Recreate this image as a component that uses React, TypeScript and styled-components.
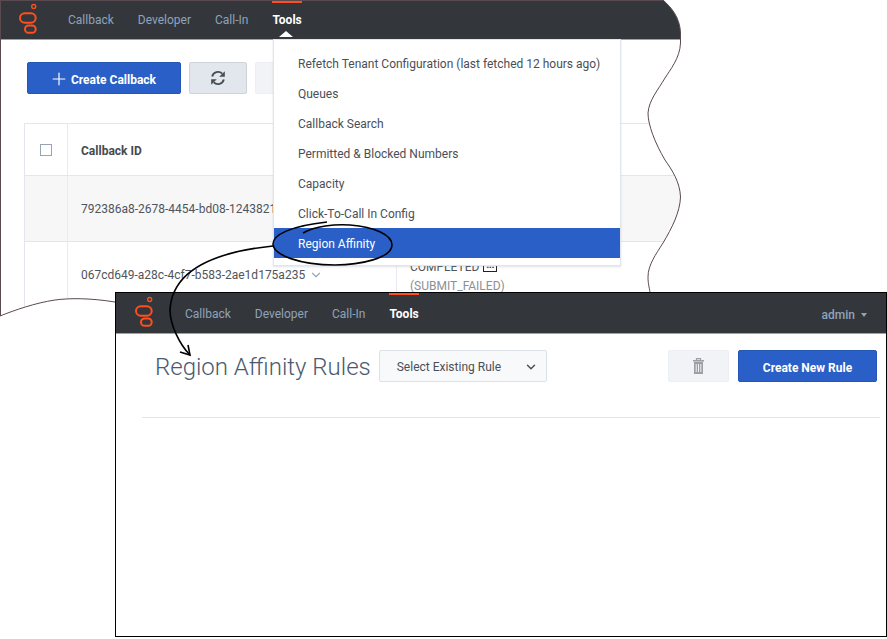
import React from "react";
import styled, { createGlobalStyle } from "styled-components";
import { ChevronDown, Plus } from "lucide-react";

const Global = createGlobalStyle`
  html, body { margin: 0; padding: 0; background: #fff; }
  body { font-family: Roboto, "Liberation Sans", sans-serif; }
  * { box-sizing: border-box; }
`;

const WAVE =
  "M663 0 C672 8 680 18 680.5 33 L680.5 43 C680 58 670 70 665 78 C658 90 649 100 648 113 C648 125 655 143 665 160 C672 170 680 182 680.5 197 C680 212 672 228 663 243 C656 254 648 265 648 277 C648 285 650 290 650 293";
const BOTTOM = "L115 302 C90 298 70 298 55 300 C35 303 15 310 0 316 Z";
const OUTER = `M0 0 L663 0 ${WAVE.slice(WAVE.indexOf("C"))} ${BOTTOM}`;

const Canvas = styled.div`
  position: relative;
  width: 887px;
  height: 639px;
  overflow: hidden;
  background: #fff;
`;

const BackWindow = styled.div`
  position: absolute;
  left: 0;
  top: 0;
  width: 690px;
  height: 320px;
  background: #fff;
  clip-path: path("${OUTER}");
`;

const Overlay = styled.svg`
  position: absolute;
  left: 0;
  top: 0;
  width: 887px;
  height: 639px;
  pointer-events: none;
`;

const Header = styled.header<{ $h: number; $left: number }>`
  position: relative;
  display: flex;
  align-items: center;
  height: ${(p) => p.$h}px;
  padding-left: ${(p) => p.$left}px;
  background: #33373b;
  border-bottom: 1px solid #97a3b0;
`;

const LogoBox = styled.svg`
  flex: none;
  width: 20px;
  height: 32px;
  margin-right: 29px;
  overflow: visible;
`;

const Nav = styled.nav<{ $shift: number }>`
  display: flex;
  gap: 24px;
  margin-left: ${(p) => p.$shift}px;
  padding-top: ${(p) => p.$shift}px;
`;

const NavItem = styled.a<{ $active?: boolean }>`
  position: relative;
  font-size: 12px;
  line-height: 16px;
  color: ${(p) => (p.$active ? "#fff" : "#8fa3bb")};
  font-weight: ${(p) => (p.$active ? 700 : 400)};
`;

const ActiveBar = styled.span<{ $top: number }>`
  position: absolute;
  left: 0;
  right: 0;
  top: ${(p) => p.$top}px;
  height: 2px;
  background: #ff4f1f;
`;

const Caret = styled.span`
  position: absolute;
  left: 7px;
  top: 19px;
  width: 0;
  height: 0;
  border-left: 7px solid transparent;
  border-right: 7px solid transparent;
  border-bottom: 6px solid #fff;
`;

const BackBody = styled.main`
  padding: 22px 0 0 24px;
`;

const Toolbar = styled.div`
  display: flex;
  gap: 8px;
  padding-left: 3px;
  margin-bottom: 29px;
`;

const PrimaryBtn = styled.button<{ $w: number }>`
  display: flex;
  align-items: center;
  justify-content: center;
  gap: 2px;
  width: ${(p) => p.$w}px;
  height: 32px;
  padding: 3px 0 0;
  background: #2a5fc7;
  border: 1px solid #2557b8;
  border-radius: 2px;
  color: #fff;
  font: 700 12px Roboto, sans-serif;
`;

const PlusIcon = styled(Plus)`
  margin: -2px 0 0 -3px;
`;

const GreyBtn = styled.button<{ $w: number; $light?: boolean }>`
  display: flex;
  align-items: center;
  justify-content: center;
  width: ${(p) => p.$w}px;
  height: 32px;
  padding: 0;
  background: ${(p) => (p.$light ? "#f1f3f6" : "#e2e6ed")};
  border: 1px solid ${(p) => (p.$light ? "#eceff3" : "#ced3dc")};
  border-radius: 2px;
`;

const Table = styled.div`
  width: 660px;
  border-top: 1px solid #e4e6ec;
  border-left: 1px solid #e4e6ec;
`;

const TRow = styled.div<{ $h: number; $grey?: boolean }>`
  display: grid;
  grid-template-columns: 42px 329px 1fr;
  height: ${(p) => p.$h}px;
  background: ${(p) => (p.$grey ? "#f7f7f8" : "#fff")};
  border-bottom: 1px solid #e4e6ec;
  font-size: 12px;
  color: #444a52;
`;

const Cell = styled.div<{ $line?: boolean }>`
  display: flex;
  flex-direction: column;
  align-items: flex-start;
  justify-content: center;
  min-width: 0;
  padding-left: 13px;
  white-space: nowrap;
  overflow: hidden;
  border-left: ${(p) => (p.$line ? "1px solid #e9ebf0" : "none")};
`;

const CheckCell = styled.div`
  display: flex;
  align-items: center;
  justify-content: center;
  padding-top: 1px;
`;

const Check = styled.span`
  display: block;
  width: 12px;
  height: 12px;
  border: 1px solid #98a4b3;
  background: #fff;
`;

const HeadText = styled.span`
  font-weight: 700;
  padding-top: 2px;
`;

const IdRow = styled.div<{ $bottom?: number; $top?: number }>`
  display: flex;
  align-items: center;
  gap: 4px;
  padding-bottom: ${(p) => p.$bottom ?? 0}px;
  padding-top: ${(p) => p.$top ?? 0}px;
  color: #4f555d;
`;

const StatusCol = styled.div`
  padding-bottom: 5px;
`;

const Status = styled.div`
  display: flex;
  align-items: center;
  gap: 4px;
  line-height: 16px;
  color: #4f555d;
`;

const Ellipsis = styled.span`
  display: inline-block;
  width: 14px;
  height: 10px;
  border: 1px solid #222;
  font-size: 9px;
  font-weight: 700;
  line-height: 5px;
  text-align: center;
  color: #111;
`;

const Sub = styled.div`
  margin-top: 3px;
  line-height: 16px;
  color: #8c8f94;
`;

const Menu = styled.div`
  position: absolute;
  left: 273px;
  top: 39px;
  width: 348px;
  height: 227px;
  padding: 8px 0 7px;
  background: #fff;
  border: 1px solid #e1e6ee;
  box-shadow: 0 1px 2px rgba(120, 135, 160, 0.25);
`;

const MenuItem = styled.div<{ $selected?: boolean }>`
  display: flex;
  align-items: center;
  height: 30px;
  padding: 1px 0 0 24px;
  font-size: 12px;
  color: ${(p) => (p.$selected ? "#fff" : "#4a4f57")};
  background: ${(p) => (p.$selected ? "#2a5fc7" : "transparent")};
`;

const FrontWindow = styled.section`
  position: absolute;
  left: 115px;
  top: 292px;
  width: 772px;
  height: 345px;
  background: #fff;
  border: 1px solid #000;
`;

const UserMenu = styled.div`
  display: flex;
  align-items: center;
  gap: 6px;
  margin-left: auto;
  margin-right: 19px;
  padding-top: 4px;
  font-size: 12px;
  font-weight: 500;
  color: #8fa3bb;
`;

const TinyCaret = styled.span`
  width: 0;
  height: 0;
  border-left: 3px solid transparent;
  border-right: 3px solid transparent;
  border-top: 4px solid #8fa3bb;
`;

const FrontBar = styled.div`
  display: flex;
  align-items: flex-start;
  height: 84px;
  margin-left: 26px;
  margin-right: 6px;
  padding: 16px 3px 0 13px;
  border-bottom: 1px solid #e2e5ea;
`;

const Title = styled.h1`
  margin: 1px 8px 0 0;
  font-size: 24px;
  font-weight: 300;
  line-height: 32px;
  color: #4a5a70;
`;

const SelectBox = styled.div`
  display: flex;
  align-items: center;
  justify-content: space-between;
  width: 168px;
  height: 32px;
  padding: 2px 8px 0 17px;
  background: #f8f9fb;
  border: 1px solid #dde1e8;
  border-radius: 2px;
  font-size: 12px;
  color: #4a4f57;
`;

const Actions = styled.div`
  display: flex;
  gap: 9px;
  margin-left: auto;
`;

const Logo = () => (
  <LogoBox viewBox="0 0 20 32" fill="none" stroke="#ff4f1f">
    <circle cx="14.7" cy="2.5" r="2" strokeWidth="1.3" />
    <rect x="1" y="9.2" width="15.7" height="9.6" rx="4.8" strokeWidth="2" />
    <rect x="6" y="21.5" width="10.7" height="7.3" rx="3.6" strokeWidth="2" />
  </LogoBox>
);

const RefreshIcon = () => (
  <svg width="16" height="16" viewBox="0 0 16 16" fill="none">
    <path d="M2.2 6.5 A6 6 0 0 1 12.2 3.6" stroke="#484c54" strokeWidth="1.9" />
    <path d="M13.8 9.5 A6 6 0 0 1 3.8 12.4" stroke="#484c54" strokeWidth="1.9" />
    <path d="M14.8 1.2 V6.8 H9.2 Z" fill="#484c54" />
    <path d="M1.2 14.8 V9.2 H6.8 Z" fill="#484c54" />
  </svg>
);

const TrashIcon = () => (
  <svg width="11" height="16" viewBox="0 0 11 16" fill="none">
    <path d="M3.5 2 V0.7 H7.5 V2" stroke="#9c9fa3" strokeWidth="1.2" />
    <path d="M0 2 H11 V3.6 H0 Z" fill="#9c9fa3" />
    <path d="M1 4 H10 V16 H1 Z" fill="#9c9fa3" />
    <path d="M3.2 6 V14 M5.5 6 V14 M7.8 6 V14" stroke="#f1f3f6" strokeWidth="1" />
  </svg>
);

const MENU = [
  "Refetch Tenant Configuration (last fetched 12 hours ago)",
  "Queues",
  "Callback Search",
  "Permitted & Blocked Numbers",
  "Capacity",
  "Click-To-Call In Config",
  "Region Affinity",
];

const navItems = (top: number, caret: boolean, shift: number) => (
  <Nav $shift={shift}>
    <NavItem>Callback</NavItem>
    <NavItem>Developer</NavItem>
    <NavItem>Call-In</NavItem>
    <NavItem $active>
      <ActiveBar $top={top} />
      Tools
      {caret && <Caret />}
    </NavItem>
  </Nav>
);

export default function App() {
  return (
    <Canvas>
      <Global />
      <BackWindow>
        <Header $h={40} $left={19}>
          <Logo />
          {navItems(-11, true, 0)}
        </Header>
        <BackBody>
          <Toolbar>
            <PrimaryBtn $w={154}>
              <PlusIcon size={20} strokeWidth={1.4} />
              Create Callback
            </PrimaryBtn>
            <GreyBtn $w={58}>
              <RefreshIcon />
            </GreyBtn>
            <GreyBtn $w={60} $light />
          </Toolbar>
          <Table>
            <TRow $h={52}>
              <CheckCell>
                <Check />
              </CheckCell>
              <Cell $line>
                <HeadText>Callback ID</HeadText>
              </Cell>
              <Cell />
            </TRow>
            <TRow $h={66} $grey>
              <CheckCell />
              <Cell $line>
                <IdRow $top={1}>792386a8-2678-4454-bd08-124382110f7a</IdRow>
              </Cell>
              <Cell />
            </TRow>
            <TRow $h={74}>
              <CheckCell />
              <Cell $line>
                <IdRow $bottom={8}>
                  067cd649-a28c-4cf7-b583-2ae1d175a235
                  <ChevronDown size={14} color="#9aa7b5" />
                </IdRow>
              </Cell>
              <Cell $line>
                <StatusCol>
                  <Status>
                    COMPLETED
                    <Ellipsis>...</Ellipsis>
                  </Status>
                  <Sub>(SUBMIT_FAILED)</Sub>
                </StatusCol>
              </Cell>
            </TRow>
          </Table>
        </BackBody>
        <Menu>
          {MENU.map((m, i) => (
            <MenuItem key={m} $selected={i === MENU.length - 1}>
              {m}
            </MenuItem>
          ))}
        </Menu>
      </BackWindow>
      <Overlay viewBox="0 0 887 639" fill="none">
        <path d="M0.5 0.5 L663 0.5" stroke="#5a4a50" strokeWidth="1" />
        <path d="M0.5 0 L0.5 316" stroke="#5a4a50" strokeWidth="1" />
        <path d={WAVE} stroke="#5a4a50" strokeWidth="1" />
        <path d="M115 302 C90 298 70 298 55 300 C35 303 15 310 0 316" stroke="#5a4a50" strokeWidth="1" />
      </Overlay>
      <FrontWindow>
        <Header $h={41} $left={19}>
          <Logo />
          {navItems(-13, false, 1)}
          <UserMenu>
            admin
            <TinyCaret />
          </UserMenu>
        </Header>
        <FrontBar>
          <Title>Region Affinity Rules</Title>
          <SelectBox>
            Select Existing Rule
            <ChevronDown size={14} color="#4a4f57" strokeWidth={2.5} />
          </SelectBox>
          <Actions>
            <GreyBtn $w={61} $light>
              <TrashIcon />
            </GreyBtn>
            <PrimaryBtn $w={139}>Create New Rule</PrimaryBtn>
          </Actions>
        </FrontBar>
      </FrontWindow>
      <Overlay viewBox="0 0 887 639" fill="none">
        <path
          d="M303 233 C315 226 335 224 350 225 C375 227 392 235 392 245 C392 258 360 265 335 265 C300 265 273 255 273 244 C273 235 290 226 327 222"
          stroke="#000"
          strokeWidth="1.6"
        />
        <path d="M273 246 C215 252 172 270 170 310 C170 325 180 345 190 355" stroke="#000" strokeWidth="1.6" />
        <path d="M180 352 L190 355 L188 345" stroke="#000" strokeWidth="1.6" />
      </Overlay>
    </Canvas>
  );
}
